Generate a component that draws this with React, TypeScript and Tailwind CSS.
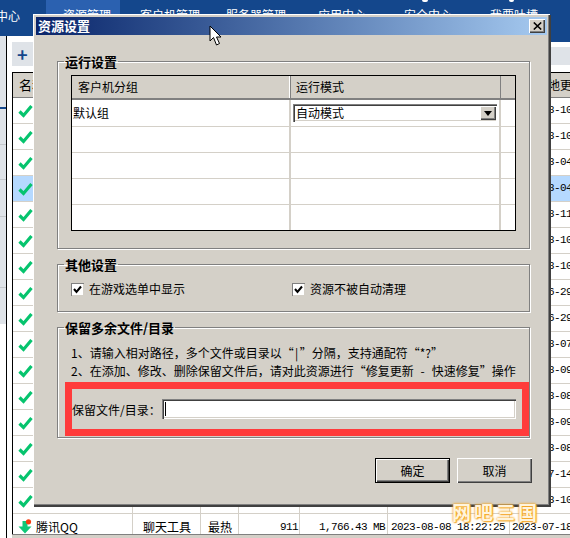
import React from "react";

const cjk = "font-['Noto_Sans_CJK_SC','Liberation_Sans',sans-serif]";
const mono = "font-['Liberation_Mono',monospace] text-[11px] tracking-[-0.6px]";
const raised = "shadow-[inset_1px_1px_0_#ffffff,inset_-1px_-1px_0_#404040,inset_-2px_-2px_0_#808080]";
const sunken = "shadow-[inset_1px_1px_0_#808080,inset_2px_2px_0_#404040,inset_-1px_-1px_0_#ffffff,inset_-2px_-2px_0_#d4d0c8]";

const dates = ["2023-08-10","2023-08-10","2023-08-04","2023-08-04","2023-08-11","2023-08-10","2023-08-10","2023-06-29","2023-06-29","2023-08-07","2023-08-09","2023-08-08","2023-08-09","2023-08-08","2023-07-14","2023-08-10"];

function Check() {
  return (
    <svg width="15" height="14" viewBox="0 0 15 14" className="ml-[5px] shrink-0">
      <path d="M1.5 7.5 L5.5 11.5 L13.5 2" fill="none" stroke="#06c46e" strokeWidth="3.2" />
    </svg>
  );
}

function DownIcon() {
  return (
    <svg width="15" height="16" viewBox="0 0 15 16" className="ml-[5px] shrink-0">
      <path d="M4.5 2 H9.5 V7.5 H13.5 L7 14.5 L0.5 7.5 H4.5 Z" fill="#10c878" />
      <circle cx="10.5" cy="2.8" r="2.6" fill="#f53d10" />
    </svg>
  );
}

const cols = "grid grid-cols-[120px_68px_38px_61px_88px_122px_60px]";
const cell = "flex items-center overflow-hidden whitespace-nowrap border-r border-[#d4d0c8]";

function Row({ date, selected }: { date: string; selected?: boolean }) {
  return (
    <div className={`${cols} h-[26px] shrink-0 border-b border-[#d4d0c8] ${selected ? "bg-[#b5d9ff]" : "bg-white"}`}>
      <div className={cell}><Check /></div>
      <div className={cell} />
      <div className={cell} />
      <div className={cell} />
      <div className={cell} />
      <div className={cell} />
      <div className={`${mono} flex items-center overflow-hidden whitespace-nowrap pl-[2px] text-black`}>{date}</div>
    </div>
  );
}

function Nav() {
  return (
    <div className="flex h-[36px] bg-[#14478c] text-[12px] text-white">
      <div className="flex w-[46px] justify-end overflow-hidden whitespace-nowrap pr-[26px] pt-[7px]">中心</div>
      <div className="w-[74px] bg-[#2b61b0] pl-[17px] pt-[6px]">资源管理</div>
      <div className="w-[86px] pl-[20px] pt-[6px]">客户机管理</div>
      <div className="w-[92px] pl-[20px] pt-[6px]">服务器管理</div>
      <div className="w-[86px] pl-[20px] pt-[6px]">应用中心 ⌄</div>
      <div className="relative w-[86px] pl-[20px] pt-[6px]">
        安全中心 ⌄
        <span className="absolute left-[38px] top-0 h-[2px] w-[6px] rounded-b bg-white" />
      </div>
      <div className="relative pl-[20px] pt-[6px]">
        我要吐槽
        <span className="absolute left-[39px] top-0 h-[2px] w-[5px] rounded-b bg-white" />
      </div>
    </div>
  );
}

function Sidebar() {
  return (
    <div className="flex w-[7px] shrink-0 flex-col border-r border-black bg-white">
      <div className="h-[71px] bg-[#dfe3e8]" />
      <div className="h-[2px] bg-[#14478c]" />
      <div className="h-[36px] border-b border-[#c5c8cc] bg-[#dfe3e8]" />
      <div className="h-[35px] border-b border-[#c5c8cc] bg-[#dfe3e8]" />
      <div className="h-[37px] border-b border-[#c5c8cc] bg-[#dfe3e8]" />
      <div className="h-[71px] border-b border-[#c5c8cc] bg-[#dfe3e8]" />
      <div className="h-[36px] bg-[#dfe3e8]" />
    </div>
  );
}

function ListTable() {
  return (
    <div className="flex h-[462px] flex-col overflow-hidden border-l border-t border-black text-[12px] text-black">
      <div className={`${cols} h-[25px] shrink-0 border-b border-[#808080] bg-[#d4d0c8]`}>
        <div className="flex items-center pl-[6px] text-[13px]">名称</div>
        <div /><div /><div /><div /><div />
        <div className="flex items-center whitespace-nowrap pl-[26px] text-[12px]">最地更新时间</div>
      </div>
      {dates.map((d, i) => (
        <Row key={i} date={d} selected={i === 3} />
      ))}
      <div className={`${cols} h-[26px] shrink-0 bg-white`}>
        <div className={cell}><DownIcon /><span className="ml-[3px]">腾讯QQ</span></div>
        <div className={`${cell} pl-[10px]`}>聊天工具</div>
        <div className={`${cell} pl-[7px]`}>最热</div>
        <div className={`${cell} ${mono} justify-end pr-[1px]`}>911</div>
        <div className={`${cell} ${mono} justify-end pr-[2px]`}>1,766.43 MB</div>
        <div className={`${cell} ${mono} pl-[3px]`}>2023-08-08 18:22:25</div>
        <div className={`${mono} flex items-center overflow-hidden whitespace-nowrap pl-[2px]`}>2023-07-18</div>
      </div>
    </div>
  );
}

function Background() {
  return (
    <>
      <Nav />
      <div className="flex bg-white">
        <Sidebar />
        <div className="ml-[5px] min-w-0 flex-1 bg-white">
          <div className="flex h-[6px]">
            <div className="w-[34px] bg-white" />
            <div className="flex-1 bg-[#14478c]" />
          </div>
          <div className="flex h-[24px]">
            <div className="flex w-[200px] items-center bg-[#dfe3e8] pl-[5px] text-[18px] font-bold leading-none text-[#14478c]">+</div>
            <div className="flex-1 bg-white pt-[5px]"><div className="h-[18px] bg-[#dfe3e8]" /></div>
          </div>
          <div className="h-[6px]" />
          <ListTable />
          <div className="h-[6px] border-t border-[#808080] bg-[#d4d0c8]" />
        </div>
      </div>
    </>
  );
}

function Group({ title, className, children }: { title: string; className: string; children: React.ReactNode }) {
  return (
    <fieldset className={`ml-[21px] w-[473px] shrink-0 border border-[#808080] shadow-[1px_1px_0_#ffffff,inset_1px_1px_0_#ffffff] ${className}`}>
      <legend className="ml-[6px] px-[1px] text-[13px] font-bold leading-[15px] text-black">{title}</legend>
      {children}
    </fieldset>
  );
}

function Box({ label }: { label: string }) {
  return (
    <label className="flex h-[18px] items-center gap-[5px]">
      <span className="flex h-[13px] w-[13px] items-center justify-center bg-white shadow-[inset_1px_1px_0_#808080,inset_-1px_-1px_0_#d4d0c8]">
        <svg width="9" height="9" viewBox="0 0 9 9">
          <path d="M1 4 L3.5 7 L8 1.5" fill="none" stroke="#000" strokeWidth="2" />
        </svg>
      </span>
      <span>{label}</span>
    </label>
  );
}

function Btn({ label, isDefault }: { label: string; isDefault?: boolean }) {
  return (
    <div className={`flex h-[25px] w-[75px] items-center justify-center bg-[#d4d0c8] text-[12px] ${raised} ${isDefault ? "border border-black" : ""}`}>
      {label}
    </div>
  );
}

function Open() {
  return <span className="inline-block w-[12px] text-right">“</span>;
}

function Close() {
  return <span className="inline-block w-[12px] text-left">”</span>;
}

const grid3 = "grid grid-cols-[219px_210px_14px]";

function Dialog() {
  return (
    <div className="absolute left-[33px] top-[14px] flex h-[492px] w-[517px] flex-col bg-[#d4d0c8] p-[3px] text-[12px] text-black shadow-[inset_1px_1px_0_#ffffff,inset_-1px_-1px_0_#404040,inset_-2px_-2px_0_#808080,1px_1px_0_#404040]">
      <div className="flex h-[18px] shrink-0 items-center justify-between bg-gradient-to-r from-[#0a246a] to-[#a6caf0] px-[2px] text-[13px] font-bold text-white">
        <span>资源设置</span>
        <span className={`flex h-[14px] w-[16px] items-center justify-center bg-[#d4d0c8] ${raised}`}>
          <svg width="9" height="8" viewBox="0 0 9 8"><path d="M0.8 0.5 L8.2 7.5 M8.2 0.5 L0.8 7.5" stroke="#000" strokeWidth="1.6" /></svg>
        </span>
      </div>

      <Group title="运行设置" className="mt-[19px] h-[195px]">
        <div className="px-[13px] pt-[6px]">
          <div className="flex h-[156px] flex-col border border-black bg-white">
            <div className={`${grid3} h-[24px] shrink-0 border-b-2 border-[#808080] bg-[#d4d0c8]`}>
              <div className="flex items-center border-r border-[#808080] pl-[6px] shadow-[inset_-1px_0_0_#fff]">客户机分组</div>
              <div className="flex items-center border-r border-[#808080] pl-[5px]">运行模式</div>
              <div />
            </div>
            <div className={`${grid3} h-[27px] shrink-0 border-b border-[#d4d0c8]`}>
              <div className="flex items-center border-r-2 border-[#d4d0c8] pl-[1px]">默认组</div>
              <div className="flex items-center border-r-2 border-[#d4d0c8] pl-[2px]">
                <div className={`flex h-[18px] w-[204px] items-center justify-between bg-white pl-[3px] pr-[1px] ${sunken}`}>
                  <span>自动模式</span>
                  <span className={`flex h-[14px] w-[16px] items-center justify-center bg-[#d4d0c8] ${raised}`}>
                    <svg width="8" height="5" viewBox="0 0 8 5"><path d="M0 0 H8 L4 5 Z" fill="#000" /></svg>
                  </span>
                </div>
              </div>
              <div />
            </div>
            {[0, 1, 2].map((i) => (
              <div key={i} className={`${grid3} h-[26px] shrink-0 border-b border-[#d4d0c8]`}>
                <div className="border-r-2 border-[#d4d0c8]" />
                <div className="border-r-2 border-[#d4d0c8]" />
                <div />
              </div>
            ))}
            <div className={`${grid3} flex-1`}>
              <div className="border-r-2 border-[#d4d0c8]" />
              <div className="border-r-2 border-[#d4d0c8]" />
              <div />
            </div>
          </div>
        </div>
      </Group>

      <Group title="其他设置" className="mt-[8px] h-[55px]">
        <div className="grid grid-cols-[221px_1fr] pl-[13px] pt-[8px]">
          <Box label="在游戏选单中显示" />
          <Box label="资源不被自动清理" />
        </div>
      </Group>

      <Group title="保留多余文件/目录" className="mt-[8px] h-[118px]">
        <div className="pl-[7px] pt-[9px]">
          <p className="ml-[6px] whitespace-nowrap leading-[18px]">
            1、请输入相对路径，多个文件或目录以<Open /><span className="inline-block w-[6px] text-center">|</span><Close />分隔，支持通配符<Open />*?<Close />
          </p>
          <p className="ml-[6px] whitespace-nowrap leading-[18px]">
            2、在添加、修改、删除保留文件后，请对此资源进行<Open />修复更新<span className="inline-block w-[18px] text-center">-</span>快速修复<Close />操作
          </p>
          <div className="mt-[2px] flex h-[54px] w-[464px] items-center border-[7px] border-[#ff3b3b] pr-[6px]">
            <span className="w-[90px] whitespace-nowrap pt-[1px]">保留文件/目录：</span>
            <div className={`flex h-[20px] flex-1 items-center bg-white pl-[3px] ${sunken}`}>
              <span className="h-[14px] w-[1px] bg-black" />
            </div>
          </div>
        </div>
      </Group>

      <div className="mt-[20px] flex justify-end gap-[7px] pr-[15px]">
        <Btn label="确定" isDefault />
        <Btn label="取消" />
      </div>
    </div>
  );
}

export default function App() {
  return (
    <div className={`relative h-[538px] w-[570px] overflow-hidden bg-white ${cjk}`}>
      <Background />
      <Dialog />
      <svg width="14" height="22" viewBox="0 0 14 22" className="absolute left-[209px] top-[25px]">
        <path d="M1 1 V16 L4.5 12.5 L7.5 20 L10.5 18.5 L7.5 12 H12 Z" fill="#fff" stroke="#000" strokeWidth="1" />
      </svg>
      <div className="absolute left-[452px] top-[500px] text-[19px] font-bold leading-[24px] tracking-[3px] text-[#fff4dc] [text-shadow:0_0_2px_#f5a623,0_0_3px_#f5a623,1px_1px_1px_#f5b04a]">
        网吧三国
      </div>
    </div>
  );
}
